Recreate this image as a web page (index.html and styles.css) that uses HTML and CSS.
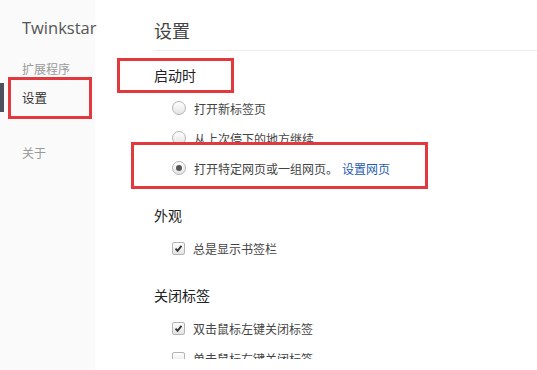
FILE: index.html
```html
<!DOCTYPE html>
<html lang="zh">
<head>
<meta charset="utf-8">
<title>设置</title>
<link rel="stylesheet" href="styles.css">
</head>
<body>
<div class="app">
  <aside class="sidebar">
    <div class="brand">Twinkstar</div>
    <nav class="nav">
      <div class="nav-item">扩展程序</div>
      <div class="nav-item active">设置</div>
      <div class="nav-item spaced">关于</div>
    </nav>
  </aside>
  <main class="main">
    <header class="page-title">设置</header>
    <section class="section first">
      <h2 class="section-title">启动时</h2>
      <div class="row"><span class="radio"></span><span>打开新标签页</span></div>
      <div class="row"><span class="radio"></span><span>从上次停下的地方继续</span></div>
      <div class="row"><span class="radio checked"></span><span>打开特定网页或一组网页。</span><a class="link">设置网页</a></div>
    </section>
    <section class="section">
      <h2 class="section-title">外观</h2>
      <div class="row"><span class="checkbox checked"><svg viewBox="0 0 13 13"><path d="M3 6.6 L5.4 9.2 L10 3.4" /></svg></span><span>总是显示书签栏</span></div>
    </section>
    <section class="section">
      <h2 class="section-title">关闭标签</h2>
      <div class="row"><span class="checkbox checked"><svg viewBox="0 0 13 13"><path d="M3 6.6 L5.4 9.2 L10 3.4" /></svg></span><span>双击鼠标左键关闭标签</span></div>
      <div class="row"><span class="checkbox"></span><span>单击鼠标右键关闭标签</span></div>
    </section>
  </main>
</div>
<div class="mark mark-nav"></div>
<div class="mark mark-startup"></div>
<div class="mark mark-option"></div>
</body>
</html>
```
FILE: styles.css
```css
* { box-sizing: border-box; }
html, body { margin: 0; padding: 0; background: #fff; }
body {
  font-family: "Noto Sans CJK SC", "Open Sans", sans-serif;
  color: #333;
  width: 537px;
  height: 370px;
  overflow: hidden;
  position: relative;
}
.app { display: flex; height: 370px; }
.sidebar {
  width: 95px;
  flex: none;
  background: #fafafa;
  padding-top: 17px;
}
.brand {
  font-family: "Open Sans", "Noto Sans", sans-serif;
  font-size: 16.5px;
  line-height: 22px;
  color: #555;
  padding-left: 22px;
}
.nav { margin-top: 15px; display: flex; flex-direction: column; }
.nav-item {
  height: 29px;
  line-height: 29px;
  font-size: 12px;
  color: #999;
  padding-left: 22px;
  position: relative;
}
.nav-item.active { color: #333; font-size: 12.5px; }
.nav-item.active::before {
  content: "";
  position: absolute;
  left: 0; top: 0; bottom: 0;
  width: 4px;
  background: #4b505c;
}
.nav-item.spaced { margin-top: 26px; }
.main {
  flex: 1;
  height: 359px;
  overflow: hidden;
  padding-left: 59px;
}
.page-title {
  font-size: 18px;
  line-height: 24px;
  color: #444;
  padding-top: 18px;
  padding-bottom: 8px;
  border-bottom: 1px solid #ececec;
}
.section { margin-top: 22px; }
.section.first { margin-top: 14px; }
.section-title {
  margin: 0 0 8px 0;
  font-size: 14px;
  font-weight: normal;
  line-height: 20px;
  color: #222;
}
.row {
  height: 30px;
  display: flex;
  align-items: center;
  padding-left: 18px;
  font-size: 12px;
  color: #444;
  gap: 8px;
}
.radio {
  width: 14px; height: 14px;
  border-radius: 50%;
  border: 1px solid #b4b4b4;
  background: linear-gradient(#ffffff, #e4e4e4);
  position: relative;
  flex: none;
}
.radio.checked::after {
  content: "";
  position: absolute;
  left: 3px; top: 3px;
  width: 6px; height: 6px;
  border-radius: 50%;
  background: #555;
}
.checkbox {
  width: 13px; height: 13px;
  border: 1px solid #b4b4b4;
  border-radius: 2px;
  background: linear-gradient(#ffffff, #e2e2e2);
  flex: none;
  display: flex;
}
.checkbox svg { width: 11px; height: 11px; }
.checkbox path { fill: none; stroke: #333; stroke-width: 2.2; }
.link { color: #1f5bb4; margin-left: -4px; }
.mark {
  position: absolute;
  border: 3px solid #e2393f;
  pointer-events: none;
}
.mark-nav { left: 8px; top: 77px; width: 84px; height: 42px; }
.mark-startup { left: 117px; top: 58px; width: 117px; height: 35px; }
.mark-option { left: 131px; top: 142px; width: 297px; height: 47px; }
```
